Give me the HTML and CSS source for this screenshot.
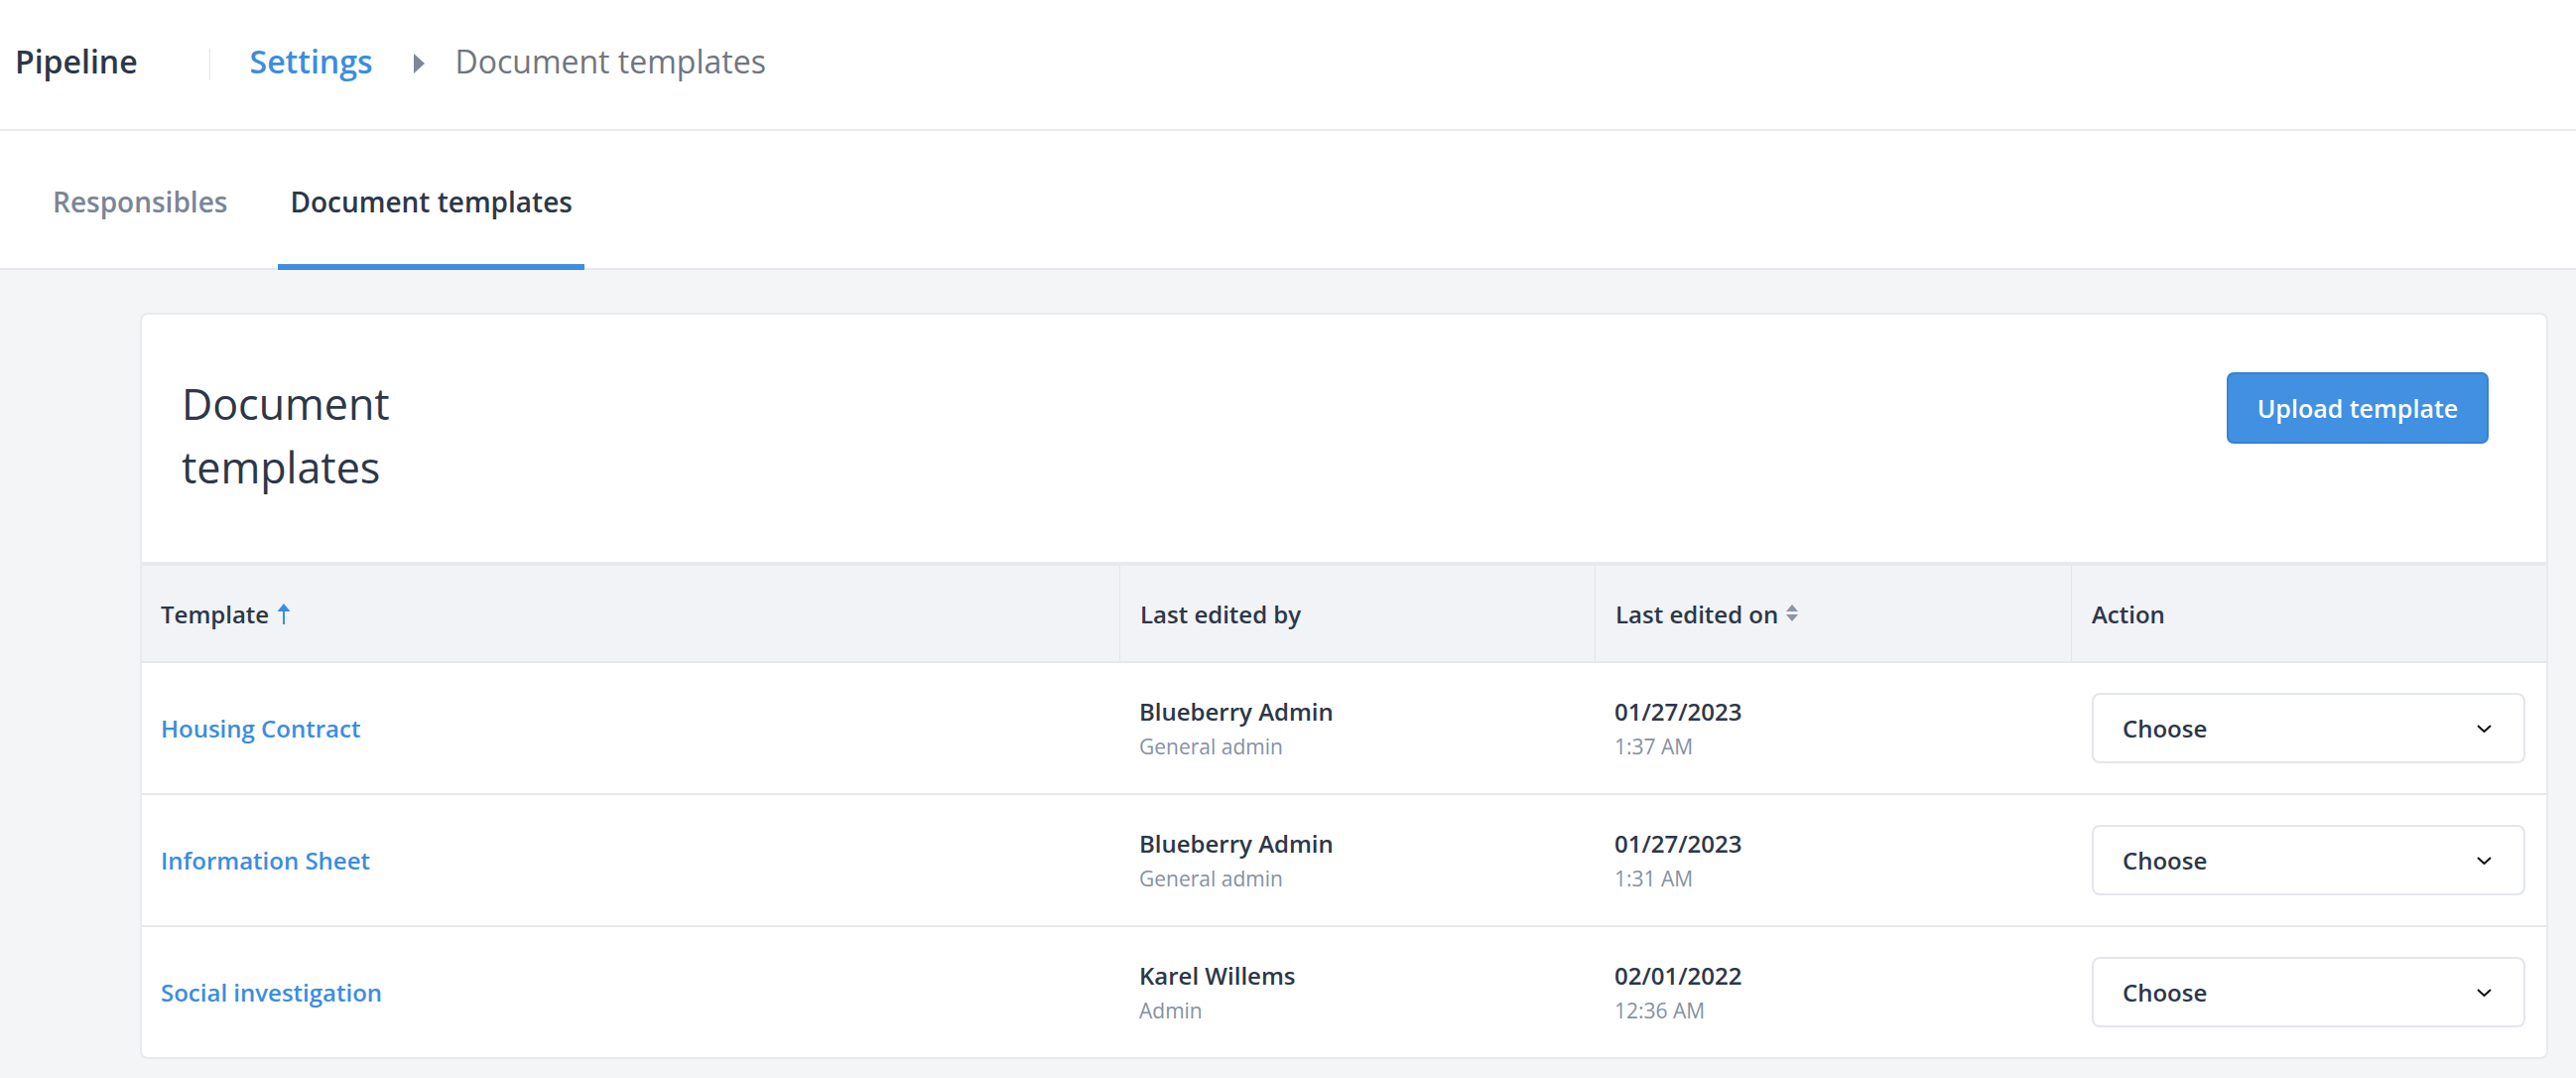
FILE: index.html
```html
<!DOCTYPE html>
<html>
<head>
<meta charset="utf-8">
<link rel="stylesheet" href="styles.css">
</head>
<body>
<header class="topbar">
  <span class="brand">Pipeline</span>
  <span class="vsep"></span>
  <a class="crumb-link">Settings</a>
  <svg class="caret" width="11" height="20" viewBox="0 0 11 20"><path d="M0 0 L11 10 L0 20 Z" fill="#7f8896"/></svg>
  <span class="crumb-current">Document templates</span>
</header>
<nav class="tabs">
  <span class="tab">Responsibles</span>
  <span class="tab active">Document templates</span>
</nav>
<main class="main">
  <section class="card">
    <div class="card-head">
      <h1 class="title">Document templates</h1>
      <button class="btn-primary">Upload template</button>
    </div>
    <div class="table">
      <div class="thead">
        <div class="th">Template <svg class="sort-up" width="14" height="21" viewBox="0 0 14 21"><path d="M7 0 L13.5 8 L8 8 L8 21 L6 21 L6 8 L0.5 8 Z" fill="#3b8de0"/></svg></div>
        <div class="th">Last edited by</div>
        <div class="th">Last edited on <svg class="sort-both" width="12" height="18" viewBox="0 0 12 18"><path d="M6 0 L12 7 L0 7 Z M0 10 L12 10 L6 17 Z" fill="#8a94a6"/></svg></div>
        <div class="th">Action</div>
      </div>
      <div class="tr">
        <div class="td"><a class="link">Housing Contract</a></div>
        <div class="td"><div class="main-line">Blueberry Admin</div><div class="sub-line">General admin</div></div>
        <div class="td"><div class="main-line">01/27/2023</div><div class="sub-line">1:37 AM</div></div>
        <div class="td"><div class="select"><span>Choose</span><svg width="15" height="8" viewBox="0 0 15 8"><path d="M1 1 L7.5 7 L14 1" fill="none" stroke="#111" stroke-width="2"/></svg></div></div>
      </div>
      <div class="tr">
        <div class="td"><a class="link">Information Sheet</a></div>
        <div class="td"><div class="main-line">Blueberry Admin</div><div class="sub-line">General admin</div></div>
        <div class="td"><div class="main-line">01/27/2023</div><div class="sub-line">1:31 AM</div></div>
        <div class="td"><div class="select"><span>Choose</span><svg width="15" height="8" viewBox="0 0 15 8"><path d="M1 1 L7.5 7 L14 1" fill="none" stroke="#111" stroke-width="2"/></svg></div></div>
      </div>
      <div class="tr">
        <div class="td"><a class="link">Social investigation</a></div>
        <div class="td"><div class="main-line">Karel Willems</div><div class="sub-line">Admin</div></div>
        <div class="td"><div class="main-line">02/01/2022</div><div class="sub-line">12:36 AM</div></div>
        <div class="td"><div class="select"><span>Choose</span><svg width="15" height="8" viewBox="0 0 15 8"><path d="M1 1 L7.5 7 L14 1" fill="none" stroke="#111" stroke-width="2"/></svg></div></div>
      </div>
    </div>
  </section>
</main>
</body>
</html>
```
FILE: styles.css
```css
* { box-sizing: border-box; }
html, body { margin: 0; padding: 0; }
body {
  background: #f4f5f7;
  font-family: "Open Sans", Lato, "Liberation Sans", sans-serif;
  color: #2d3748;
  height: 1086px;
  overflow: hidden;
}
.topbar {
  height: 132px;
  background: #fff;
  border-bottom: 2px solid #e8eaee;
  display: flex;
  align-items: center;
  padding: 0 0 8px 15px;
  font-size: 32px;
}
.brand { font-weight: 600; color: #2d3748; }
.vsep { width: 1px; height: 32px; background: #e1e4e8; margin: 8px 40px 0 72px; }
.crumb-link { color: #3b8de0; font-weight: 600; }
.caret { margin: 6px 30px 0 42px; }
.crumb-current { color: #717680; }
.tabs {
  height: 140px;
  background: #fff;
  border-bottom: 2px solid #e6e8ec;
  display: flex;
  align-items: stretch;
  padding-left: 42px;
  gap: 40px;
}
.tab {
  display: flex;
  align-items: center;
  padding: 8px 11px 0 11px;
  font-size: 28px;
  font-weight: 600;
  color: #7b8596;
  margin-bottom: -2px;
  border-bottom: 6px solid transparent;
}
.tab.active { color: #2d3748; border-bottom-color: #3f8de0; padding: 8px 12px 0 12px; }
.main { padding: 43px 28px 0 141px; }
.card {
  background: #fff;
  border: 2px solid #e8eaee;
  border-radius: 8px;
  overflow: hidden;
}
.card-head {
  display: flex;
  justify-content: space-between;
  align-items: flex-start;
  padding: 58px 58px 63px 40px;
}
.title {
  margin: 0;
  max-width: 320px;
  font-size: 43px;
  line-height: 64px;
  font-weight: 400;
  color: #2d3748;
}
.btn-primary {
  width: 264px;
  height: 72px;
  background: #4190e2;
  border: 2px solid #3a82d2;
  border-radius: 7px;
  color: #fff;
  font-family: inherit;
  font-size: 25px;
  font-weight: 600;
  padding: 0;
}
.table { border-top: 4px solid #e7e9ed; }
.thead, .tr {
  display: grid;
  grid-template-columns: 985px 479px 480px 1fr;
}
.thead {
  height: 98px;
  background: #f1f3f6;
  border-bottom: 2px solid #e6e8ec;
}
.th {
  display: flex;
  align-items: center;
  gap: 8px;
  padding-left: 19px;
  font-size: 24px;
  font-weight: 600;
  color: #2d3748;
  border-left: 1px solid #e2e5ea;
}
.th:first-child { border-left: none; }
.th + .th { padding-left: 20px; }
.tr {
  height: 133px;
  border-bottom: 2px solid #e6e8ec;
}
.tr:last-child { border-bottom: none; height: 131px; }
.td {
  display: flex;
  flex-direction: column;
  justify-content: center;
  padding-left: 20px;
}
.td:first-child { padding-left: 19px; }
.td:last-child { padding: 0 21px 0 21px; }
.link { color: #3b8de0; font-weight: 600; font-size: 24px; }
.main-line { font-size: 24px; line-height: 36px; font-weight: 600; color: #2d3748; }
.sub-line { font-size: 21px; line-height: 34px; color: #8691a4; }
.select {
  height: 71px;
  border: 2px solid #e3e6eb;
  border-radius: 8px;
  display: flex;
  align-items: center;
  justify-content: space-between;
  padding: 0 32px 0 29px;
  font-size: 24px;
  font-weight: 600;
  color: #2d3748;
}
```
